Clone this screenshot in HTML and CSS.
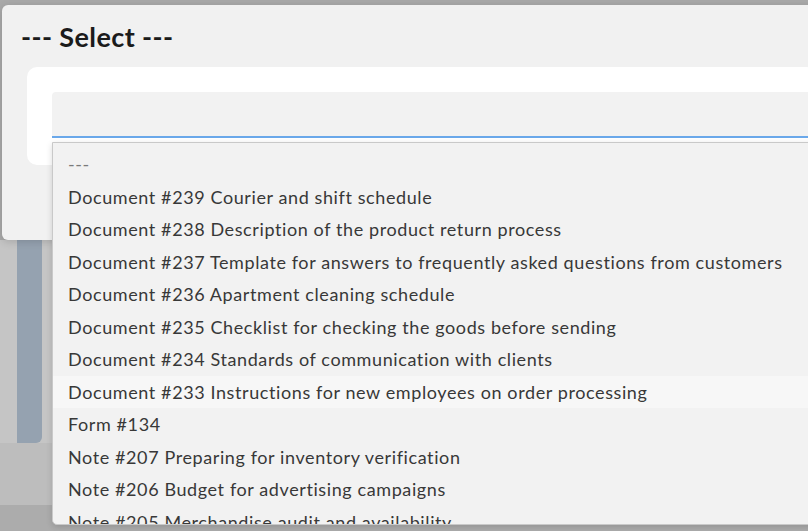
FILE: index.html
```html
<!DOCTYPE html>
<html lang="en">
<head>
    <meta charset="UTF-8">
    <meta name="viewport" content="width=device-width, initial-scale=1.0">
    <title>Select</title>
    <link rel="stylesheet" href="styles.css">
</head>
<body>
    <div class="page">
        <div class="page-top"></div>
        <div class="page-main">
            <div class="page-side">
                <div class="side-strip"></div>
            </div>
        </div>
        <div class="page-footer"></div>
        <div class="page-bottom"></div>
    </div>

    <div class="modal">
        <h1 class="modal-title">--- Select ---</h1>
        <div class="modal-card">
            <div class="select-box"></div>
        </div>
    </div>

    <ul class="dropdown">
        <li class="option placeholder">---</li>
        <li class="option">Document #239 Courier and shift schedule</li>
        <li class="option">Document #238 Description of the product return process</li>
        <li class="option">Document #237 Template for answers to frequently asked questions from customers</li>
        <li class="option">Document #236 Apartment cleaning schedule</li>
        <li class="option">Document #235 Checklist for checking the goods before sending</li>
        <li class="option">Document #234 Standards of communication with clients</li>
        <li class="option hover">Document #233 Instructions for new employees on order processing</li>
        <li class="option">Form #134</li>
        <li class="option">Note #207 Preparing for inventory verification</li>
        <li class="option">Note #206 Budget for advertising campaigns</li>
        <li class="option">Note #205 Merchandise audit and availability</li>
    </ul>
</body>
</html>
```

FILE: styles.css
```css
* {
    box-sizing: border-box;
    margin: 0;
    padding: 0;
}

body {
    font-family: Lato, "Open Sans", sans-serif;
    background-color: #b9b9b9;
    overflow: hidden;
    width: 808px;
    height: 531px;
}

/* dimmed page behind the modal */
.page {
    display: flex;
    flex-direction: column;
    height: 531px;
}

.page-top {
    height: 240px;
    background: #a9a9a9;
}

.page-main {
    height: 203px;
    background: #c2c2c2;
}

.page-side {
    width: 52px;
    height: 100%;
    padding-left: 17px;
    background: #c5c5c5;
}

.side-strip {
    width: 25px;
    height: 100%;
    background: #95a2b0;
    border-bottom-right-radius: 6px;
}

.page-footer {
    height: 62px;
    background: #bdbdbd;
}

.page-bottom {
    flex: 1;
    background: #acacac;
}

/* modal */
.modal {
    position: absolute;
    left: 2px;
    top: 5px;
    width: 840px;
    height: 235px;
    padding: 15px 25px 0 19px;
    background: #f1f1f1;
    border-radius: 6px;
    box-shadow: 0 2px 8px rgba(0,0,0,0.15);
}

.modal-title {
    font-size: 27px;
    font-weight: 700;
    letter-spacing: 0.4px;
    color: #1b1b1b;
    line-height: 34px;
    margin-bottom: 13px;
}

.modal-card {
    margin-left: 6px;
    padding: 25px 0 27px 25px;
    background: #ffffff;
    border-radius: 10px;
}

.select-box {
    height: 46px;
    background: #f2f2f2;
    border-bottom: 2px solid #6aa8ea;
    border-top-left-radius: 4px;
}

/* open option list */
.dropdown {
    position: absolute;
    left: 52px;
    top: 142px;
    width: 780px;
    height: 383px;
    padding-top: 5px;
    list-style: none;
    overflow: hidden;
    background: #f2f2f2;
    border: 1px solid #c9c9c9;
    border-radius: 0 0 0 5px;
    box-shadow: 0 2px 6px rgba(0,0,0,0.15);
}

.option {
    height: 32.5px;
    line-height: 32.5px;
    padding-left: 15px;
    font-size: 18px;
    letter-spacing: 0.6px;
    color: #383838;
    white-space: nowrap;
}

.option.placeholder {
    color: #7a7a7a;
}

.option.hover {
    background: #f7f7f7;
}
```
